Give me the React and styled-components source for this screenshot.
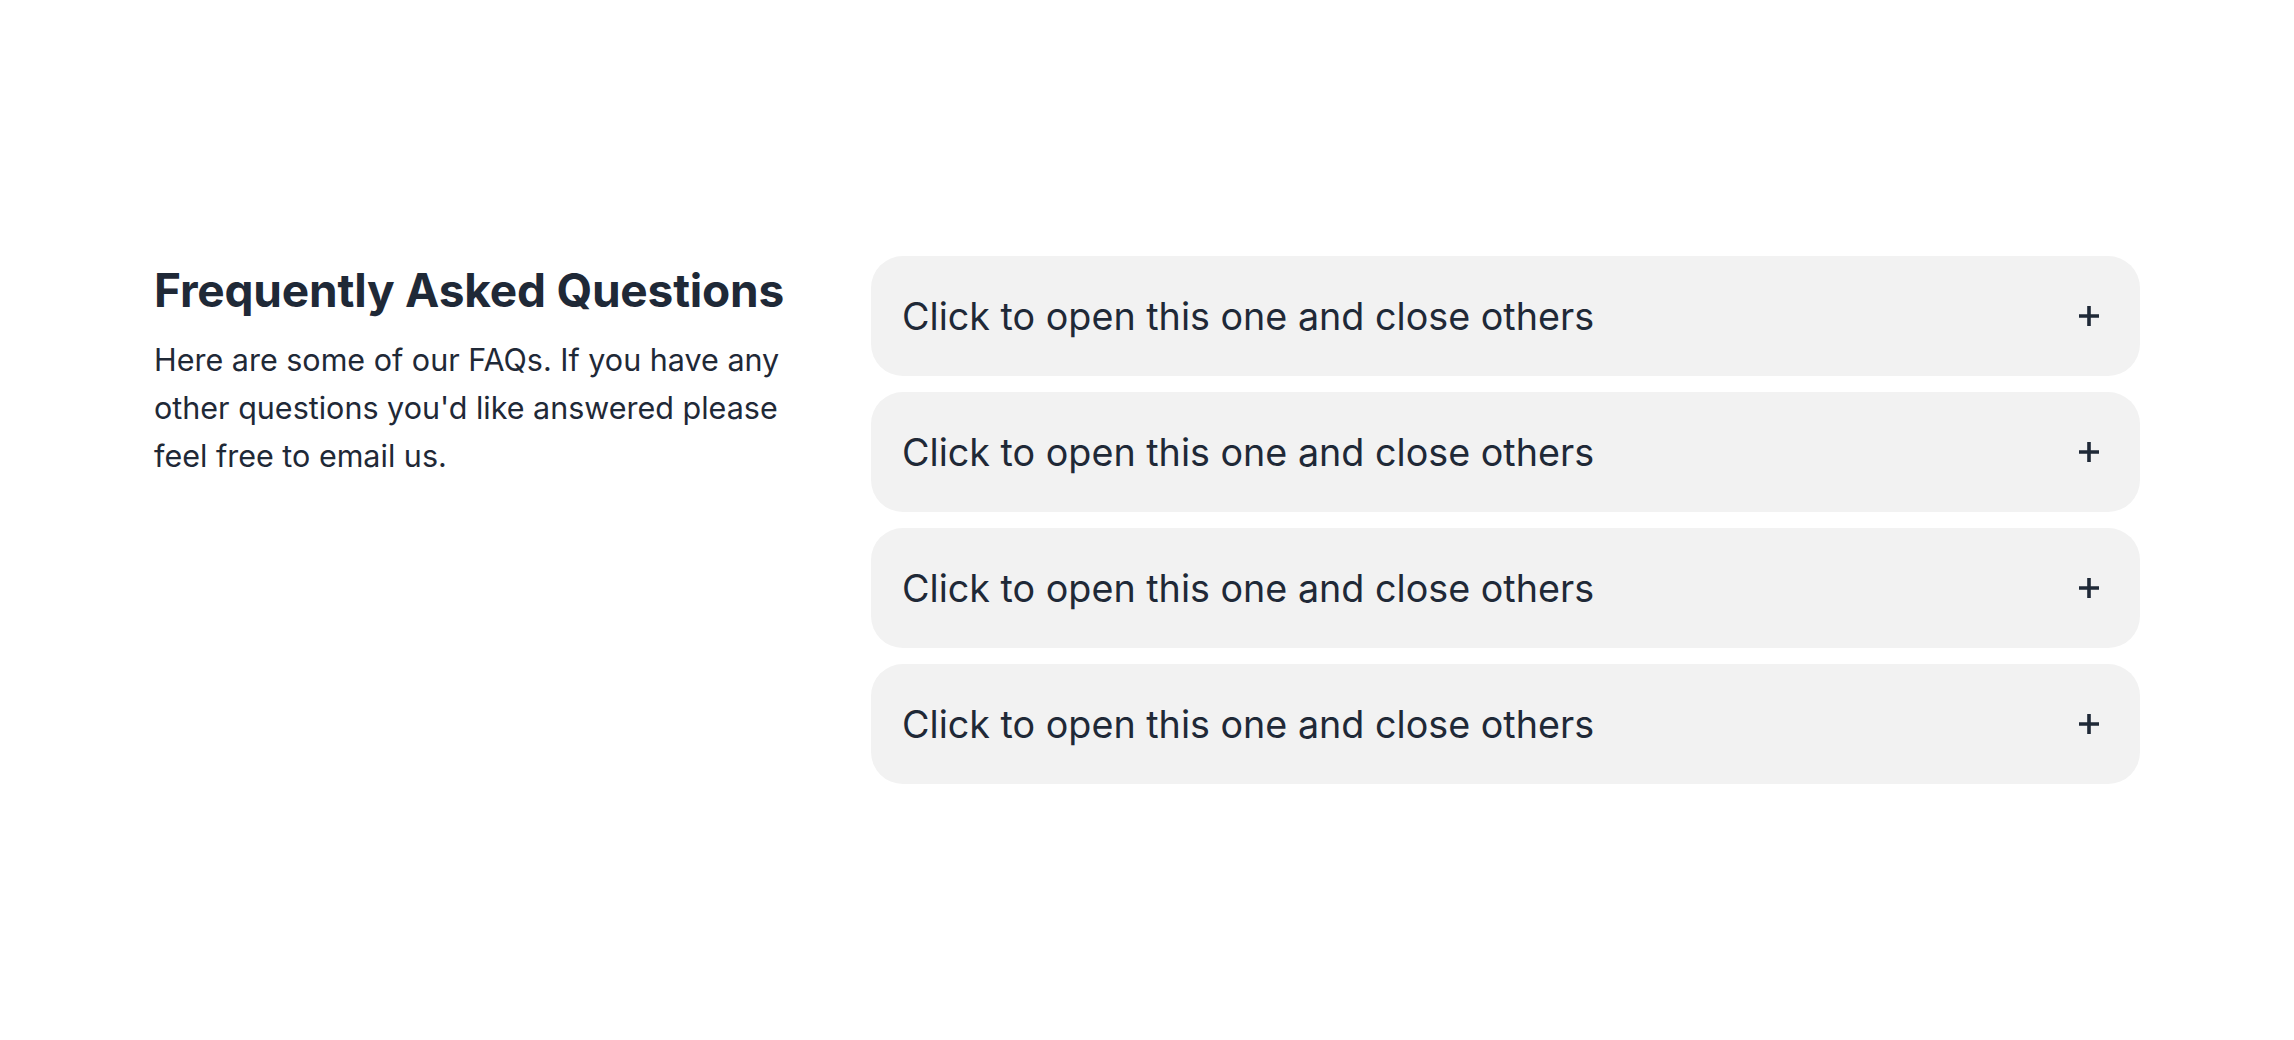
import styled, { createGlobalStyle } from 'styled-components'

const GlobalStyle = createGlobalStyle`
	* {
		box-sizing: border-box;
	}
	body {
		margin: 0;
		background: #ffffff;
		font-family: Inter, "Noto Sans", sans-serif;
		color: #1f2937;
	}
`

const Page = styled.div`
	min-height: 100vh;
	display: flex;
	align-items: center;
	justify-content: center;
`
const Container = styled.div`
	width: 1986px;
	display: flex;
	align-items: flex-start;
	gap: 77px;
`

// LEFT
const Intro = styled.div`
	width: 640px;
	flex-shrink: 0;
	padding-top: 7px;
`
const Title = styled.h2`
	margin: 0 0 19px;
	font-size: 46px;
	line-height: 54px;
	font-weight: 700;
	letter-spacing: -0.2px;
	color: #1f2937;
`
const Description = styled.p`
	margin: 0;
	font-size: 30.5px;
	line-height: 48px;
	color: #1f2937;
`

// RIGHT
const List = styled.div`
	flex: 1;
	display: flex;
	flex-direction: column;
	gap: 16px;
`
const Item = styled.button`
	display: flex;
	align-items: center;
	justify-content: space-between;
	width: 100%;
	height: 120px;
	padding: 0 40px 0 31px;
	border: none;
	border-radius: 32px;
	background-color: #f2f2f2;
	font-family: inherit;
	font-size: 37.7px;
	color: #1f2937;
	text-align: left;
	cursor: pointer;
`
const Plus = styled.svg`
	width: 22px;
	height: 22px;
	flex-shrink: 0;
`

const questions = [
	'Click to open this one and close others',
	'Click to open this one and close others',
	'Click to open this one and close others',
	'Click to open this one and close others',
]

const App = () => {
	return (
		<>
			<GlobalStyle />
			<Page>
				<Container>
					<Intro>
						<Title>Frequently Asked Questions</Title>
						<Description>
							Here are some of our FAQs. If you have any other questions you'd
							like answered please feel free to email us.
						</Description>
					</Intro>
					<List>
						{questions.map((q, i) => (
							<Item key={i}>
								<span>{q}</span>
								<Plus viewBox="0 0 22 22">
									<path
										d="M11 1v20M1 11h20"
										stroke="#1f2937"
										strokeWidth="3.6"
										fill="none"
									/>
								</Plus>
							</Item>
						))}
					</List>
				</Container>
			</Page>
		</>
	)
}

export default App
